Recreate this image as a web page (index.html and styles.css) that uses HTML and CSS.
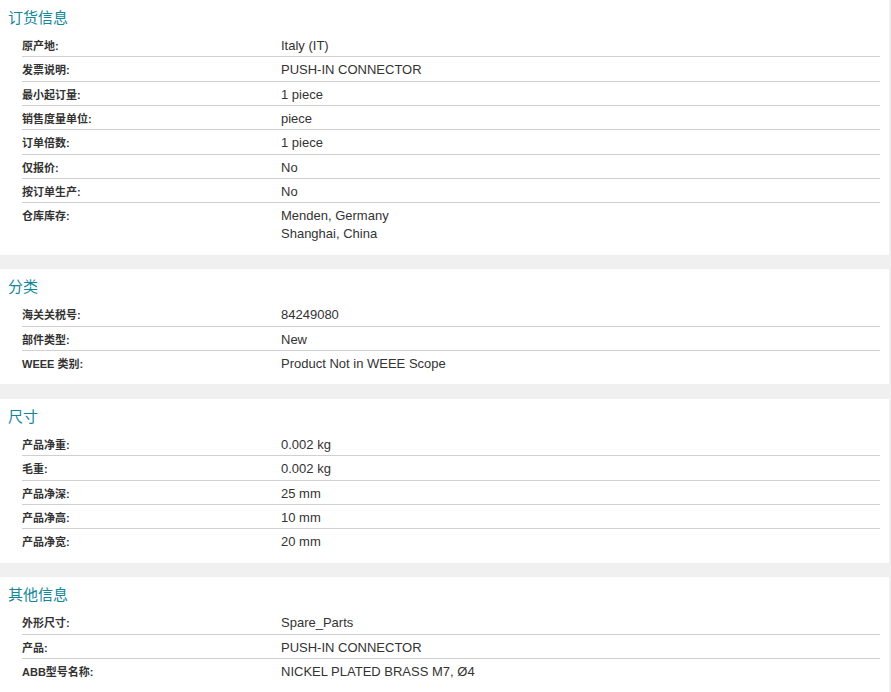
FILE: index.html
```html
<!DOCTYPE html>
<html lang="zh-CN">
<head>
<meta charset="utf-8">
<title>产品详情</title>
<link rel="stylesheet" href="styles.css">
</head>
<body>
<div class="page">
  <section class="card">
    <h2 class="card-title">订货信息</h2>
    <div class="rows">
      <div class="row"><div class="label">原产地:</div><div class="value">Italy (IT)</div></div>
      <div class="row"><div class="label">发票说明:</div><div class="value">PUSH-IN CONNECTOR</div></div>
      <div class="row"><div class="label">最小起订量:</div><div class="value">1 piece</div></div>
      <div class="row"><div class="label">销售度量单位:</div><div class="value">piece</div></div>
      <div class="row"><div class="label">订单倍数:</div><div class="value">1 piece</div></div>
      <div class="row"><div class="label">仅报价:</div><div class="value">No</div></div>
      <div class="row"><div class="label">按订单生产:</div><div class="value">No</div></div>
      <div class="row"><div class="label">仓库库存:</div><div class="value">Menden, Germany<br>Shanghai, China</div></div>
    </div>
  </section>
  <section class="card">
    <h2 class="card-title">分类</h2>
    <div class="rows">
      <div class="row"><div class="label">海关关税号:</div><div class="value">84249080</div></div>
      <div class="row"><div class="label">部件类型:</div><div class="value">New</div></div>
      <div class="row"><div class="label">WEEE 类别:</div><div class="value">Product Not in WEEE Scope</div></div>
    </div>
  </section>
  <section class="card">
    <h2 class="card-title">尺寸</h2>
    <div class="rows">
      <div class="row"><div class="label">产品净重:</div><div class="value">0.002 kg</div></div>
      <div class="row"><div class="label">毛重:</div><div class="value">0.002 kg</div></div>
      <div class="row"><div class="label">产品净深:</div><div class="value">25 mm</div></div>
      <div class="row"><div class="label">产品净高:</div><div class="value">10 mm</div></div>
      <div class="row"><div class="label">产品净宽:</div><div class="value">20 mm</div></div>
    </div>
  </section>
  <section class="card">
    <h2 class="card-title">其他信息</h2>
    <div class="rows">
      <div class="row"><div class="label">外形尺寸:</div><div class="value">Spare_Parts</div></div>
      <div class="row"><div class="label">产品:</div><div class="value">PUSH-IN CONNECTOR</div></div>
      <div class="row"><div class="label">ABB型号名称:</div><div class="value">NICKEL PLATED BRASS M7, Ø4</div></div>
    </div>
  </section>
</div>
</body>
</html>
```

FILE: styles.css
```css
html, body {
  margin: 0;
  padding: 0;
  background: #f0f0f0;
}

body {
  font-family: "Liberation Sans", Arial, "Noto Sans CJK SC", sans-serif;
  color: #333;
}

.page {
  width: 889px;
  display: flex;
  flex-direction: column;
  gap: 14.67px;
}

.card {
  background: #fff;
  padding-bottom: 9px;
}

.card-title {
  margin: 0;
  padding: 8px 0 5px 8px;
  font-size: 15px;
  line-height: 20px;
  font-weight: normal;
  color: #12879a;
}

.rows {
  margin: 0 9px 0 22px;
}

.row {
  display: grid;
  grid-template-columns: 259px 1fr;
  padding: 4px 0 1.33px;
  border-bottom: 1px solid #d0d0d0;
  line-height: 18px;
}

.row:last-child {
  border-bottom-color: transparent;
}

.label {
  font-size: 11px;
  font-weight: bold;
  color: #333;
}

.value {
  font-size: 13px;
  color: #333;
}
```
